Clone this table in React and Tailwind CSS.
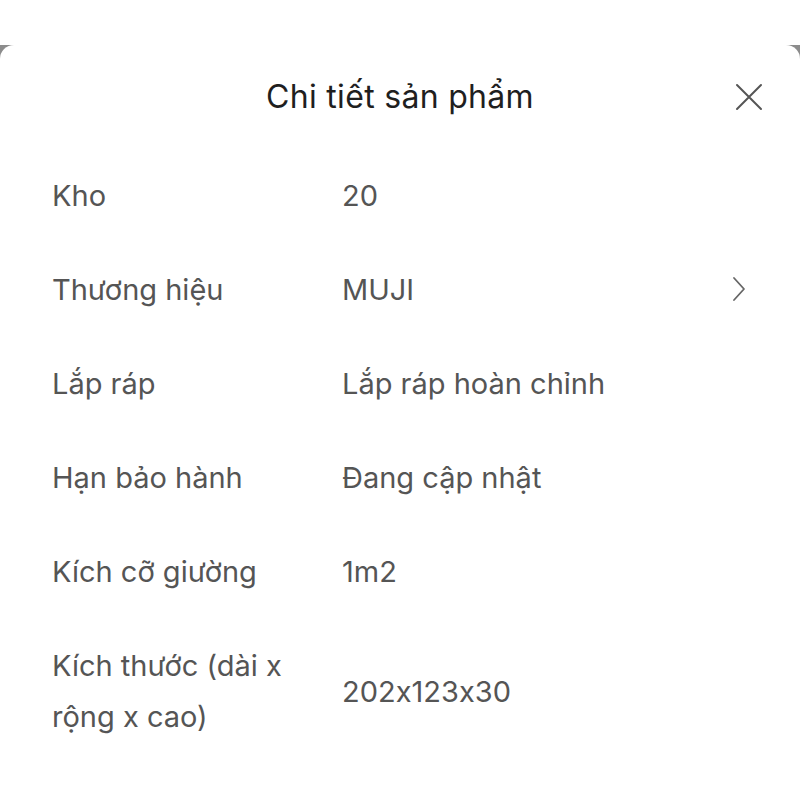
import React from 'react';

const rows = [
  { label: 'Kho', value: '20' },
  { label: 'Thương hiệu', value: 'MUJI', link: true },
  { label: 'Lắp ráp', value: 'Lắp ráp hoàn chỉnh' },
  { label: 'Hạn bảo hành', value: 'Đang cập nhật' },
  { label: 'Kích cỡ giường', value: '1m2' },
  { label: 'Kích thước (dài x rộng x cao)', value: '202x123x30' },
];

const App = () => {
  return (
    <div className="w-[800px] h-[800px] bg-white overflow-hidden font-['Inter','Noto_Sans',sans-serif] [font-feature-settings:'calt'_0]">
      <div className="h-[45px] bg-white" />
      <div className="bg-[#8c8c8c]">
        <div className="bg-white rounded-t-[14px] h-[755px]">
          {/* Header */}
          <div className="relative h-[103px] flex items-center justify-center">
            <h2 className="text-[32px] text-[#1f1f1f] tracking-[0.3px]">Chi tiết sản phẩm</h2>
            <button className="absolute right-[37px] top-[38px] w-[28px] h-[28px]">
              <svg viewBox="0 0 28 28" width="28" height="28" fill="none" stroke="#555" strokeWidth="2" strokeLinecap="round">
                <path d="M2 2 L26 26 M26 2 L2 26" />
              </svg>
            </button>
          </div>

          {/* Rows */}
          <div className="pl-[52px] pr-[54px]">
            {rows.map((row, i) => (
              <div key={i} className={`flex items-center ${i === rows.length - 1 ? 'py-[22px]' : 'h-[94px]'}`}>
                <div className="w-[290px] shrink-0 text-[29px] leading-[51px] text-[#555]">{row.label}</div>
                <div className="flex-1 text-[29px] leading-[51px] text-[#555]">{row.value}</div>
                {row.link && (
                  <svg viewBox="0 0 14 26" width="14" height="26" fill="none" stroke="#666" strokeWidth="1.8" strokeLinecap="round" strokeLinejoin="round">
                    <path d="M2 2 L12 13 L2 24" />
                  </svg>
                )}
              </div>
            ))}
          </div>
        </div>
      </div>
    </div>
  );
};

export default App;
